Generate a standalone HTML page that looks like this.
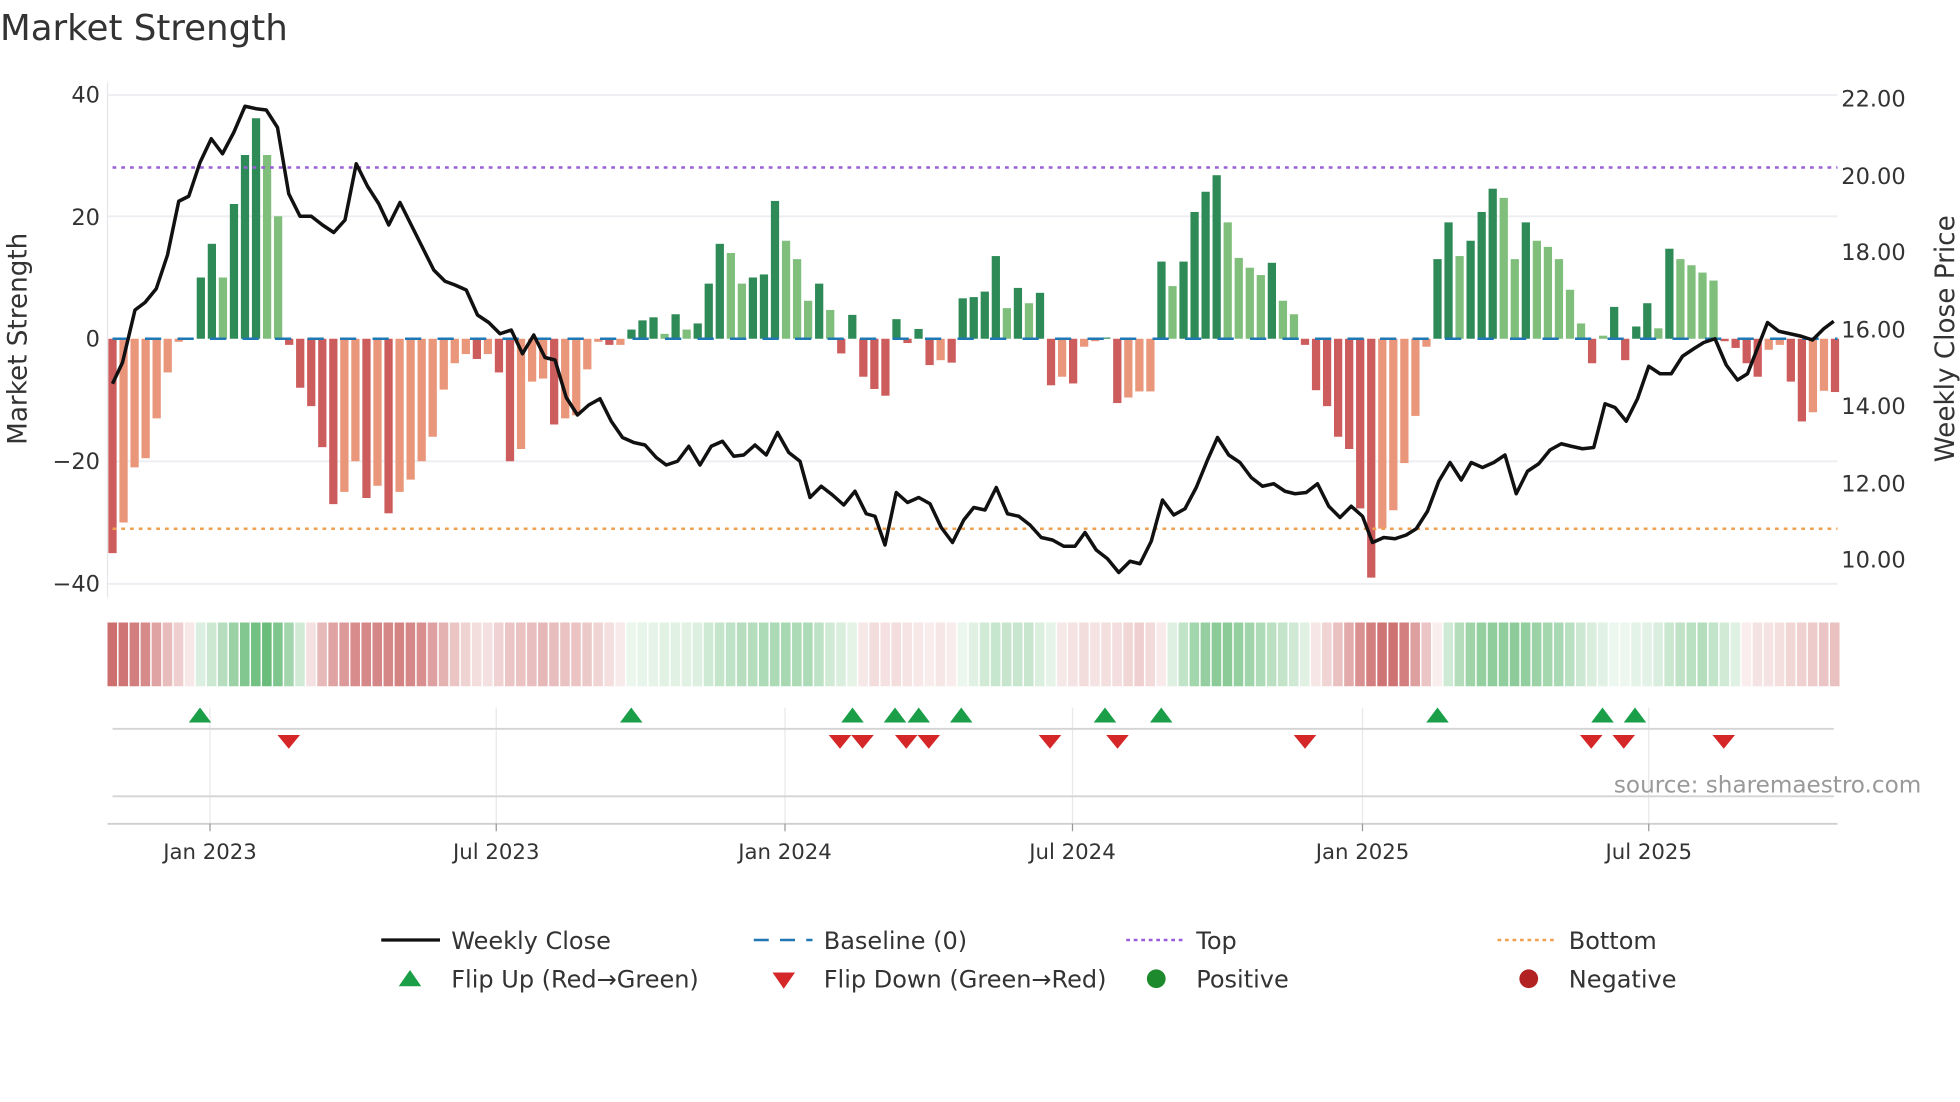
<!DOCTYPE html>
<html><head><meta charset="utf-8"><style>
html,body{margin:0;padding:0;background:#fff;width:1960px;height:1102px;overflow:hidden}
svg{display:block}
text{font-family:"DejaVu Sans","Liberation Sans",sans-serif;fill:#333}
</style></head><body>
<svg id="s" width="1960" height="1102" viewBox="0 0 1568 881.6" xmlns="http://www.w3.org/2000/svg">
<text x="0" y="32" font-size="28.5">Market Strength</text>
<g stroke="#eceef2" stroke-width="1.5">
<line x1="86" y1="76" x2="1470" y2="76"/><line x1="86" y1="173" x2="1470" y2="173"/>
<line x1="86" y1="369" x2="1470" y2="369"/><line x1="86" y1="467" x2="1470" y2="467"/>
</g>
<line x1="86" y1="66" x2="86" y2="478" stroke="#e4e6ea" stroke-width="1"/>
<g font-size="18" text-anchor="end">
<text x="80" y="82">40</text><text x="80" y="180">20</text><text x="80" y="277">0</text>
<text x="80" y="375">−20</text><text x="80" y="473">−40</text></g>
<g font-size="18">
<text x="1473" y="85">22.00</text><text x="1473" y="147">20.00</text><text x="1473" y="208">18.00</text>
<text x="1473" y="270">16.00</text><text x="1473" y="331">14.00</text><text x="1473" y="393">12.00</text><text x="1473" y="454">10.00</text></g>
<text transform="translate(21,271) rotate(-90)" font-size="21" text-anchor="middle">Market Strength</text>
<text transform="translate(1563,271) rotate(-90)" font-size="21" text-anchor="middle">Weekly Close Price</text>
<g id="bars"></g>
<line x1="90" y1="271" x2="1470" y2="271" stroke="#1f77b4" stroke-width="2" stroke-dasharray="13,13"/>
<line x1="90" y1="134" x2="1470" y2="134" stroke="#9a5fd8" stroke-width="2" stroke-dasharray="3,4"/>
<line x1="90" y1="423" x2="1470" y2="423" stroke="#f0a050" stroke-width="2" stroke-dasharray="3,4"/>
<polyline id="close" fill="none" stroke="#111" stroke-width="2.8" stroke-linejoin="round"/>
<g id="heat"></g>
<g stroke="#e8e8ec" stroke-width="1">
<line x1="168" y1="566" x2="168" y2="659"/><line x1="397" y1="566" x2="397" y2="659"/><line x1="628" y1="566" x2="628" y2="659"/>
<line x1="858" y1="566" x2="858" y2="659"/><line x1="1090" y1="566" x2="1090" y2="659"/><line x1="1319" y1="566" x2="1319" y2="659"/></g>
<line x1="90" y1="583" x2="1467" y2="583" stroke="#d4d4d4" stroke-width="1.5"/>
<line x1="90" y1="637" x2="1467" y2="637" stroke="#d4d4d4" stroke-width="1.5"/>
<line x1="86" y1="659" x2="1470" y2="659" stroke="#cfcfcf" stroke-width="1.5"/>
<g stroke="#999" stroke-width="1">
<line x1="168" y1="659" x2="168" y2="665"/><line x1="397" y1="659" x2="397" y2="665"/><line x1="628" y1="659" x2="628" y2="665"/>
<line x1="858" y1="659" x2="858" y2="665"/><line x1="1090" y1="659" x2="1090" y2="665"/><line x1="1319" y1="659" x2="1319" y2="665"/></g>
<g font-size="17" text-anchor="middle">
<text x="168" y="687">Jan 2023</text><text x="397" y="687">Jul 2023</text><text x="628" y="687">Jan 2024</text>
<text x="858" y="687">Jul 2024</text><text x="1090" y="687">Jan 2025</text><text x="1319" y="687">Jul 2025</text></g>
<g id="marks"></g>
<text x="1537" y="634" font-size="18.5" text-anchor="end" style="fill:#999">source: sharemaestro.com</text>
<g font-size="19.2">
<line x1="305" y1="752" x2="352" y2="752" stroke="#111" stroke-width="2.6"/><text x="361" y="759">Weekly Close</text>
<line x1="603" y1="752" x2="650" y2="752" stroke="#1f77b4" stroke-width="2" stroke-dasharray="12,9"/><text x="659" y="759">Baseline (0)</text>
<line x1="901" y1="752" x2="947" y2="752" stroke="#9a5fd8" stroke-width="2" stroke-dasharray="3,3"/><text x="957" y="759">Top</text>
<line x1="1198" y1="752" x2="1245" y2="752" stroke="#f0a050" stroke-width="2" stroke-dasharray="3,3"/><text x="1255" y="759">Bottom</text>
<polygon points="319,789 328,776 337,789" fill="#1a9e48"/><text x="361" y="790">Flip Up (Red→Green)</text>
<polygon points="618,778 627,791 636,778" fill="#d62728"/><text x="659" y="790">Flip Down (Green→Red)</text>
<circle cx="925" cy="783" r="7.5" fill="#1e8a2e"/><text x="957" y="790">Positive</text>
<circle cx="1223" cy="783" r="7.5" fill="#b22222"/><text x="1255" y="790">Negative</text>
</g>
</svg>
<script>
var NS="http://www.w3.org/2000/svg";
function el(t,a,p){var e=document.createElementNS(NS,t);for(var k in a)e.setAttribute(k,a[k]);p.appendChild(e);return e;}
var D=[[-35,1],[-30,0],[-21,0],[-19.5,0],[-13,0],[-5.5,0],[-0.5,0],[0,1],[10,1],[15.5,1],[10,0],[22,1],[30,1],[36,1],[30,0],[20,0],[-1,1],[-8,1],[-11,1],[-17.7,1],[-27,1],[-25,0],[-20,0],[-26,1],[-24,0],[-28.5,1],[-25,0],[-23,0],[-20,0],[-16,0],[-8.3,0],[-4,0],[-2.5,0],[-3.3,1],[-2.5,0],[-5.5,1],[-20,1],[-18,0],[-7,0],[-6.5,0],[-14,1],[-13,0],[-12.5,0],[-5,0],[-0.5,0],[-1,1],[-1,0],[1.5,1],[3,1],[3.5,1],[0.8,0],[4,1],[1.5,0],[2.5,1],[9,1],[15.5,1],[14,0],[9,0],[10,1],[10.5,1],
[22.5,1],[16,0],[13,0],[6.2,0],[9,1],[4.7,0],[-2.4,1],[3.9,1],[-6.2,1],[-8.2,1],[-9.3,1],[3.2,1],[-0.7,1],[1.6,1],[-4.3,1],[-3.5,0],[-3.9,1],[6.6,1],[6.8,1],[7.7,1],[13.5,1],[5,0],[8.3,1],[5.8,0],[7.5,1],[-7.6,1],[-6.2,0],[-7.3,1],[-1.3,0],[-0.4,0],[0.2,1],[-10.5,1],[-9.6,0],[-8.6,0],[-8.6,0],[12.6,1],[8.6,0],[12.6,1],[20.7,1],[24,1],[26.7,1],[19,0],[13.2,0],[11.6,0],[10.4,0],[12.4,1],[6.2,0],[4,0],[-1,1],[-8.4,1],[-11,1],[-16,1],[-18,1],[-27.7,1],[-39,1],[-31,0],[-28,0],[-20.3,0],[-12.6,0],[-1.3,0],[13,1],
[19,1],[13.5,0],[16,1],[20.7,1],[24.5,1],[23,0],[13,0],[19,1],[16,0],[15,0],[13,0],[8,0],[2.5,0],[-4,1],[0.5,0],[5.2,1],[-3.5,1],[2,1],[5.8,1],[1.7,0],[14.7,1],[13,0],[12,0],[10.8,0],[9.5,0],[-0.4,1],[-1.5,1],[-4,1],[-6.2,1],[-1.8,0],[-1,0],[-7,1],[-13.5,1],[-12,0],[-8.5,0],[-8.7,1]];
var sp=(1468-90)/(D.length-1),bg=document.getElementById('bars'),hg=document.getElementById('heat');
D.forEach(function(d,i){var x=90+sp*i,v=d[0],h=Math.abs(v)*4.9;
 if(h>0.3){var c=v>0?(d[1]?'#2e8b57':'#7fbf7b'):(d[1]?'#cd5c5c':'#e9967a');
 el('rect',{x:x-3.3,y:v>0?271-h:271,width:6.6,height:h,fill:c},bg);}
 var s=0,n=0;for(var j=i-3;j<=i+1;j++){if(j>=0&&j<D.length){s+=D[j][0];n++;}}s/=n;
 var t=Math.min(Math.abs(s)/30,1)*0.8+0.1,c1=s>=0?[76,175,96]:[200,95,95];
 var r=Math.round(255+(c1[0]-255)*t),g=Math.round(255+(c1[1]-255)*t),b=Math.round(255+(c1[2]-255)*t);
 el('rect',{x:x-4,y:498,width:sp-1.2,height:51,fill:'rgb('+r+','+g+','+b+')'},hg);
});
var P="90,307 98,290 108,248 116,242 125,231 134,204 143,161 151,157 160,130 169,111 178,123 187,106 196,85 205,87 213,88 222,102 231,155 240,173 249,173 258,180 267,186 276,176 285,131 294,149 303,163 311,180 320,162 329,180 338,198 347,216 356,225 364,228 373,232 382,252 391,258 400,267 409,264 418,283 427,268 436,286 444,288 453,318 462,332 471,324 480,319 489,337 498,350 507,354 516,356 525,366 533,372 542,369 551,357 560,372 569,357 578,353 587,365 595,364 604,356 613,364 622,346 631,362 640,369 648,398 657,389 666,396 675,404 684,393 693,411 700,413 708,436 717,394 726,402 735,398 744,403 753,422 762,434 771,416 779,406 788,408 797,390 806,411 815,413 824,420 833,430 842,432 851,437 860,437 868,426 877,440 886,447 895,458 904,449 912,451 921,433 930,400 939,412 948,407 957,390 966,368 974,350 983,364 992,370 1001,382 1010,389 1019,387 1028,393 1036,395 1045,394 1054,387 1063,405 1072,414 1081,405 1090,413 1098,434 1107,430 1116,431 1125,428 1133,423 1142,409 1151,385 1160,370 1169,384 1177,370 1186,374 1195,370 1204,364 1213,395 1222,377 1231,371 1240,360 1249,355 1257,357 1266,359 1275,358 1284,323 1292,326 1301,337 1310,319 1319,293 1328,299 1337,299 1346,285 1355,279 1363,274 1372,271 1381,292 1390,304 1398,299 1407,276 1414,258 1423,265 1432,267 1441,269 1450,272 1459,263 1467,257";
document.getElementById('close').setAttribute('points',P);
var mg=document.getElementById('marks');
[160,505,682,716,735,769,884,929,1150,1282,1308].forEach(function(x){el('polygon',{points:(x-9)+',578 '+x+',566 '+(x+9)+',578',fill:'#1a9e48'},mg);});
[231,672,690,725,743,840,894,1044,1273,1299,1379].forEach(function(x){el('polygon',{points:(x-9)+',588 '+x+',599 '+(x+9)+',588',fill:'#d62728'},mg);});
</script>
</body></html>
